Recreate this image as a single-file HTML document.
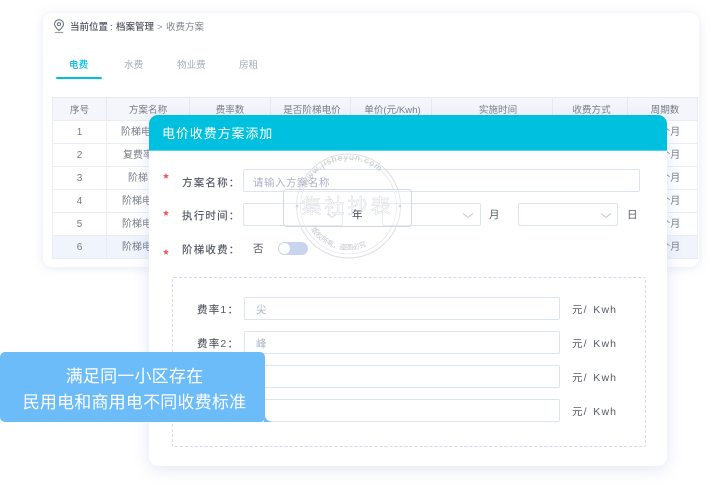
<!DOCTYPE html>
<html lang="zh"><head><meta charset="utf-8">
<style>
*{box-sizing:border-box;margin:0;padding:0}
html,body{width:715px;height:485px;overflow:hidden;background:#fff}
body{position:relative;font-family:"Liberation Sans","Noto Sans CJK SC",sans-serif;filter:blur(.25px)}
.a{position:absolute;white-space:nowrap}
.card{left:43px;top:13px;width:656px;height:254px;background:#fff;border-radius:9px;box-shadow:0 1px 10px rgba(190,200,230,.4)}
.hc,.c{position:absolute;text-align:center;font-size:9.6px;color:#747983;white-space:nowrap;overflow:hidden}
.hc{background:#f4f6fb;border:1px solid #e6eaf5;height:24px;line-height:25px;top:97px;margin-left:-1px}
.c{border:1px solid #e9edf7;height:24px;line-height:24px;margin-left:-1px;font-size:10px}
.modal{left:149px;top:115px;width:518px;height:351px;background:#fff;border-radius:9px;box-shadow:0 3px 16px rgba(190,200,235,.45)}
.head{left:149px;top:115px;width:518px;height:36px;background:#00c0df;border-radius:9px 9px 0 0;border-bottom:1px solid #4fd6ec;color:#fff;font-size:13px;line-height:37px;padding-left:13px;letter-spacing:.9px}
.lb{font-size:10.5px;color:#555a63;letter-spacing:1.2px;line-height:14px;font-weight:500}
.in{position:absolute;background:#fff;border:1px solid #dbe3f5;border-radius:2px}
.ph{font-size:10.5px;color:#aeb6c8;line-height:14px;letter-spacing:.5px}
.u{font-size:10.5px;color:#555a63;letter-spacing:1.15px;line-height:14px;word-spacing:1.500px}
.note{left:0;top:352px;width:265px;height:70px;background:#6bbcf8;border-radius:5px;color:#fff;font-size:17px;letter-spacing:.2px;line-height:26px;text-align:center;padding:12px 0 0 4px}
.tab{font-size:9.6px;line-height:14px;top:59px;color:#a5acba}
.bc{font-size:9.5px;line-height:15px;top:20px}
</style></head><body>
<div class="a card"></div>
<svg class="a" style="left:53px;top:19px" width="12" height="15" viewBox="0 0 12 15" fill="none" stroke="#5d646e" stroke-width="1"><path d="M6 11.500C3 8.800 1.500 6.800 1.500 5.200a4.500 4.500 0 0 1 9 0c0 1.600-1.500 3.600-4.500 6.300z"/><circle cx="6" cy="5.200" r="1.600"/><path d="M1.800 13.500h8.400" stroke="#9aa0aa" stroke-width="1.200"/></svg>
<div class="a bc" style="left:70px;color:#4c525c;font-weight:500">当前位置</div>
<div class="a bc" style="left:110px;color:#4c525c;font-weight:500">:</div>
<div class="a bc" style="left:116px;color:#4c525c;font-weight:500">档案管理</div>
<div class="a bc" style="left:157px;color:#8a9099">&gt;</div>
<div class="a bc" style="left:166px;color:#7e848e">收费方案</div>
<div class="a tab" style="left:69px;color:#00bfdc;font-weight:500">电费</div>
<div class="a" style="left:56px;top:77px;width:46px;height:2px;background:#00c0df;border-radius:1px"></div>
<div class="a tab" style="left:124px">水费</div>
<div class="a tab" style="left:177px">物业费</div>
<div class="a tab" style="left:239px">房租</div>

<div class="hc" style="left:53px;width:55px">序号</div>
<div class="hc" style="left:107px;width:84px">方案名称</div>
<div class="hc" style="left:190px;width:82px">费率数</div>
<div class="hc" style="left:271px;width:81px;padding-left:3px">是否阶梯电价</div>
<div class="hc" style="left:351px;width:82px;padding-left:3px">单价(元/Kwh)</div>
<div class="hc" style="left:432px;width:122px;padding-left:12px">实施时间</div>
<div class="hc" style="left:553px;width:76px;padding-left:3px">收费方式</div>
<div class="hc" style="left:628px;width:71px;padding-left:5px">周期数</div>

<div class="c" style="left:53px;top:120px;width:55px">1</div><div class="c" style="left:107px;top:120px;width:84px;text-align:left;padding-left:14px">阶梯电价</div><div class="c" style="left:628px;top:120px;width:71px;padding-left:10px">1个月</div>
<div class="c" style="left:53px;top:143px;width:55px">2</div><div class="c" style="left:107px;top:143px;width:84px;text-align:left;padding-left:16px">复费率</div><div class="c" style="left:628px;top:143px;width:71px;padding-left:10px">1个月</div>
<div class="c" style="left:53px;top:166px;width:55px">3</div><div class="c" style="left:107px;top:166px;width:84px;text-align:left;padding-left:21px">阶梯电价</div><div class="c" style="left:628px;top:166px;width:71px;padding-left:10px">1个月</div>
<div class="c" style="left:53px;top:189px;width:55px">4</div><div class="c" style="left:107px;top:189px;width:84px;text-align:left;padding-left:15px">阶梯电价</div><div class="c" style="left:628px;top:189px;width:71px;padding-left:10px">1个月</div>
<div class="c" style="left:53px;top:212px;width:55px">5</div><div class="c" style="left:107px;top:212px;width:84px;text-align:left;padding-left:15px">阶梯电价</div><div class="c" style="left:628px;top:212px;width:71px;padding-left:10px">1个月</div>
<div class="c" style="left:53px;top:235px;width:55px;background:#f0f4fc">6</div><div class="c" style="left:107px;top:235px;width:84px;background:#f0f4fc;text-align:left;padding-left:15px">阶梯电价</div><div class="c" style="left:628px;top:235px;width:71px;padding-left:10px;background:#f0f4fc">1个月</div>

<div class="a modal"></div>
<div class="a head">电价收费方案添加</div>

<svg class="a" style="left:163px;top:173px" width="6" height="84" fill="#f4545c"><polygon points="3,0 3.800,2 6,2.200 4.300,3.600 4.900,5.800 3,4.600 1.100,5.800 1.700,3.600 0,2.200 2.200,2"/><polygon transform="translate(0,37)" points="3,0 3.800,2 6,2.200 4.300,3.600 4.900,5.800 3,4.600 1.100,5.800 1.700,3.600 0,2.200 2.200,2"/><polygon transform="translate(0,76)" points="3,0 3.800,2 6,2.200 4.300,3.600 4.900,5.800 3,4.600 1.100,5.800 1.700,3.600 0,2.200 2.200,2"/></svg>
<div class="a lb" style="left:182px;top:176px">方案名称：</div>
<div class="a lb" style="left:182px;top:209px">执行时间：</div>
<div class="a lb" style="left:182px;top:243px">阶梯收费：</div>

<div class="in" style="left:243px;top:169px;width:397px;height:23px"></div>
<div class="a ph" style="left:253px;top:176px;color:#a9b3c8">请输入方案名称</div>

<div class="in" style="left:243px;top:203px;width:100px;height:23px"></div>
<div class="in" style="left:382px;top:203px;width:99px;height:23px"></div>
<div class="a" style="left:489px;top:208px;font-size:10.5px;line-height:14px;color:#555a63">月</div>
<div class="in" style="left:518px;top:203px;width:100px;height:23px"></div>
<div class="a" style="left:627px;top:208px;font-size:10.5px;line-height:14px;color:#555a63">日</div>
<svg class="a" style="left:325px;top:211px" width="290" height="10" fill="none" stroke="#c3c9d6"><path d="M2 2.500l5 4 5-4M138 2.500l5 4 5-4M276 2.500l5 4 5-4"/></svg>

<div class="a" style="left:253px;top:242px;font-size:10.5px;line-height:14px;color:#555a63">否</div>
<div class="a" style="left:278px;top:242px;width:30px;height:13px;border-radius:7px;background:#c9d5ee"></div>
<div class="a" style="left:279px;top:243px;width:11px;height:11px;border-radius:50%;background:#fff"></div>

<div class="a" style="left:172px;top:277px;width:474px;height:170px;border:1px dashed #d3daec;border-radius:2px"></div>
<div class="a lb" style="left:197px;top:303px">费率1：</div>
<div class="a lb" style="left:197px;top:337px">费率2：</div>
<div class="in" style="left:244px;top:297px;width:316px;height:23px"></div>
<div class="in" style="left:244px;top:331px;width:316px;height:23px"></div>
<div class="in" style="left:244px;top:365px;width:316px;height:23px"></div>
<div class="in" style="left:244px;top:399px;width:316px;height:23px"></div>
<div class="a ph" style="left:256px;top:303px">尖</div>
<div class="a ph" style="left:256px;top:337px">峰</div>
<div class="a u" style="left:572px;top:303px">元/ Kwh</div>
<div class="a u" style="left:572px;top:337px">元/ Kwh</div>
<div class="a u" style="left:572px;top:371px">元/ Kwh</div>
<div class="a u" style="left:572px;top:405px">元/ Kwh</div>

<svg class="a" style="left:280px;top:150px" width="140" height="110" viewBox="0 0 140 110">
<g fill="none" stroke="#dcdee3">
<circle cx="68.500" cy="56" r="52" stroke-width="1"/><circle cx="68.500" cy="56" r="48" stroke-width=".6"/>
<rect x="3.500" y="39.500" width="128" height="37" rx="3" fill="#fff" fill-opacity=".3" stroke="#d4d7dd"/>
</g>
<text x="67.500" y="63" text-anchor="middle" font-size="20" letter-spacing="3" fill="#fff" stroke="#d6d9de" stroke-width=".5" font-family="'Noto Sans CJK SC',sans-serif">集社抄表</text>
<circle cx="17" cy="56" r="1.300" fill="#d3d6dc"/><circle cx="120" cy="56" r="1.300" fill="#d3d6dc"/>
<path id="ar" d="M27 36A46 46 0 0 1 110 36" fill="none"/>
<text font-size="8.500" fill="#c2c5cc" letter-spacing="1" font-family="'Liberation Sans',sans-serif"><textPath href="#ar" startOffset="0">www.jisheyun.com</textPath></text>
<path id="ar2" d="M29 76A44 44 0 0 0 106 78" fill="none"/>
<text font-size="7" fill="#c2c5cc" font-family="'Noto Sans CJK SC',sans-serif"><textPath href="#ar2" startOffset="4">版权所有，盗图必究</textPath></text>
</svg>
<div class="a" style="left:352px;top:208px;font-size:10.5px;line-height:14px;color:#444a54">年</div>

<div class="a note">满足同一小区存在<br>民用电和商用电不同收费标准</div>
<svg class="a" style="left:264px;top:414px" width="9" height="8"><path d="M0 0C1 4 3 7 8 8H0z" fill="#6bbcf8"/></svg>
</body></html>
